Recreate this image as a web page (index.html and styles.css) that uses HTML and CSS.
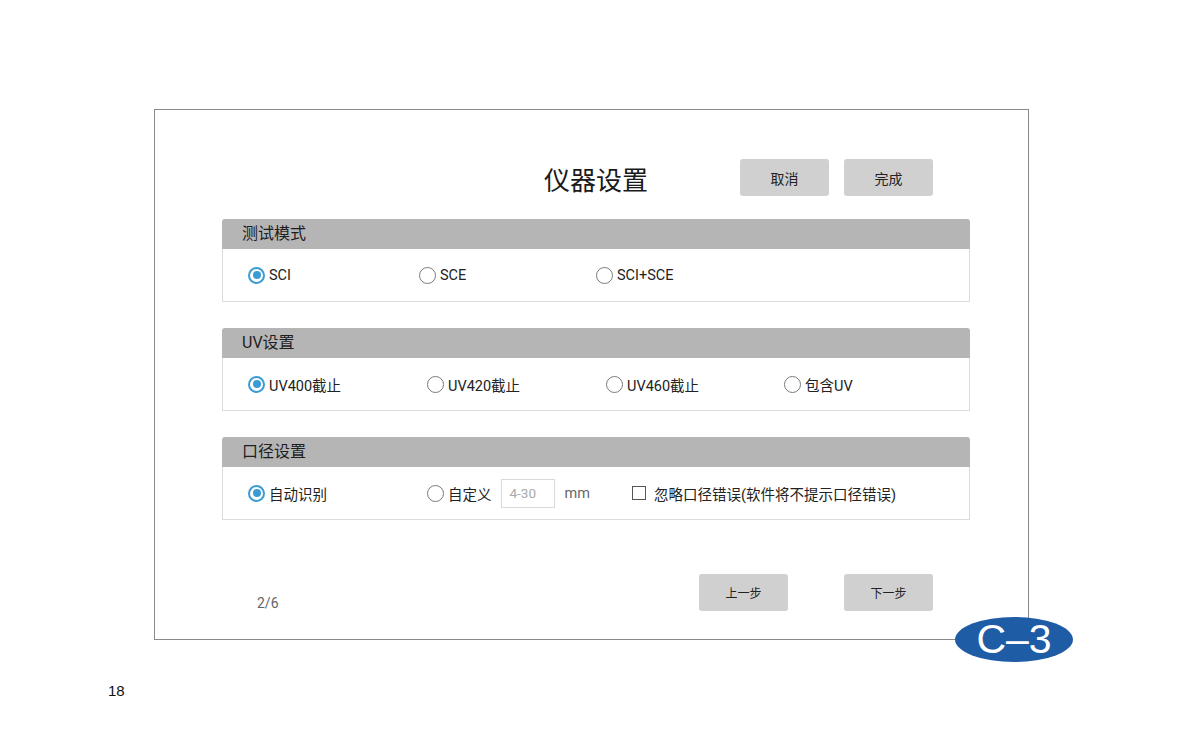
FILE: index.html
```html
<!DOCTYPE html>
<html lang="zh-CN">

<head>
    <meta charset="UTF-8">
    <meta name="viewport" content="width=device-width, initial-scale=1.0">
    <title>仪器设置</title>
    <link rel="stylesheet" href="styles.css">
</head>

<body>
    <div class="page">
        <div class="frame">
            <div class="top-bar">
                <div></div>
                <h1 class="title">仪器设置</h1>
                <div class="top-buttons">
                    <button class="btn">取消</button>
                    <button class="btn">完成</button>
                </div>
            </div>

            <!-- 测试模式 -->
            <div class="panel">
                <div class="panel-head">测试模式</div>
                <div class="panel-body">
                    <label class="option w171"><span class="radio checked"></span>SCI</label>
                    <label class="option w177"><span class="radio"></span>SCE</label>
                    <label class="option"><span class="radio"></span>SCI+SCE</label>
                </div>
            </div>

            <!-- UV设置 -->
            <div class="panel">
                <div class="panel-head">UV设置</div>
                <div class="panel-body">
                    <label class="option w179"><span class="radio checked"></span>UV400截止</label>
                    <label class="option w179"><span class="radio"></span>UV420截止</label>
                    <label class="option w178"><span class="radio"></span>UV460截止</label>
                    <label class="option"><span class="radio"></span>包含UV</label>
                </div>
            </div>

            <!-- 口径设置 -->
            <div class="panel">
                <div class="panel-head">口径设置</div>
                <div class="panel-body">
                    <label class="option w179"><span class="radio checked"></span>自动识别</label>
                    <label class="option"><span class="radio"></span>自定义</label>
                    <span class="num-input">4-30</span>
                    <span class="unit">mm</span>
                    <label class="option"><span class="checkbox"></span>忽略口径错误(软件将不提示口径错误)</label>
                </div>
            </div>

            <div class="bottom-bar">
                <span class="step">2/6</span>
                <div class="bottom-buttons">
                    <button class="btn small">上一步</button>
                    <button class="btn small">下一步</button>
                </div>
            </div>

            <div class="badge">C–3</div>
        </div>

        <div class="page-num">18</div>
    </div>
</body>

</html>
```

FILE: styles.css
```css
* {
    margin: 0;
    padding: 0;
    box-sizing: border-box;
}

body {
    background: #fff;
    font-family: Roboto, "Noto Sans CJK SC", sans-serif;
    color: #222;
}

.page {
    padding-top: 109px;
}

.frame {
    position: relative;
    margin-left: 154px;
    width: 875px;
    height: 531px;
    border: 1px solid #8a8a8a;
    padding: 0 58px 0 67px;
}

.top-bar {
    display: grid;
    grid-template-columns: 1fr auto 1fr;
    align-items: center;
    padding-top: 48px;
    height: 85px;
    margin-bottom: 24px;
}

.title {
    font-size: 26px;
    font-weight: 400;
    color: #1a1a1a;
    padding-top: 2px;
}

.top-buttons,
.bottom-buttons {
    display: flex;
    justify-content: flex-end;
    gap: 15px;
    margin-right: 37px;
}

.btn {
    width: 89px;
    height: 37px;
    border: none;
    border-radius: 3px;
    background: #d0d0d0;
    font-family: Roboto, "Noto Sans CJK SC", sans-serif;
    font-size: 14px;
    color: #222;
}

.btn.small {
    font-size: 12px;
}

.bottom-buttons {
    gap: 56px;
}

.panel {
    margin-bottom: 26px;
}

.panel-head {
    height: 30px;
    line-height: 30px;
    background: #b5b5b5;
    border-radius: 3px 3px 0 0;
    padding-left: 20px;
    font-size: 16px;
    color: #1e1e1e;
}

.panel-body {
    display: flex;
    align-items: center;
    height: 53px;
    border: 1px solid #dcdcdc;
    border-top: none;
    padding-left: 25px;
    font-size: 14.5px;
}

.option {
    display: flex;
    align-items: center;
}

.w171 {
    width: 171px;
}

.w177 {
    width: 177px;
}

.w178 {
    width: 178px;
}

.w179 {
    width: 179px;
}

.radio {
    position: relative;
    width: 17px;
    height: 17px;
    border: 1.5px solid #7a7a7a;
    border-radius: 50%;
    margin-right: 4px;
}

.radio.checked {
    border: 2px solid #3b9bd4;
}

.radio.checked::after {
    content: "";
    position: absolute;
    left: 2.5px;
    top: 2.5px;
    width: 8px;
    height: 8px;
    border-radius: 50%;
    background: #3b9bd4;
}

.num-input {
    width: 54px;
    height: 29px;
    line-height: 27px;
    border: 1px solid #dadada;
    margin-left: 9px;
    padding-left: 8px;
    color: #aaa;
    font-size: 13.5px;
}

.unit {
    margin-left: 10px;
    margin-right: 42px;
    color: #666;
    font-size: 14.5px;
}

.checkbox {
    width: 14px;
    height: 14px;
    border: 1.5px solid #555;
    margin-right: 8px;
}

.bottom-bar {
    display: flex;
    align-items: flex-end;
    justify-content: space-between;
    margin-top: 54px;
}

.step {
    margin-left: 35px;
    font-size: 14px;
    color: #666;
}

.badge {
    position: absolute;
    right: -45px;
    bottom: -23px;
    width: 118px;
    height: 45px;
    border-radius: 50%;
    background: #1f5ca6;
    color: #fff;
    font-family: "Liberation Sans", Arial, sans-serif;
    font-size: 41px;
    line-height: 45px;
    text-align: center;
}

.page-num {
    margin-top: 42px;
    margin-left: 108px;
    font-family: "Liberation Sans", Arial, sans-serif;
    font-size: 15px;
    color: #111;
}
```
